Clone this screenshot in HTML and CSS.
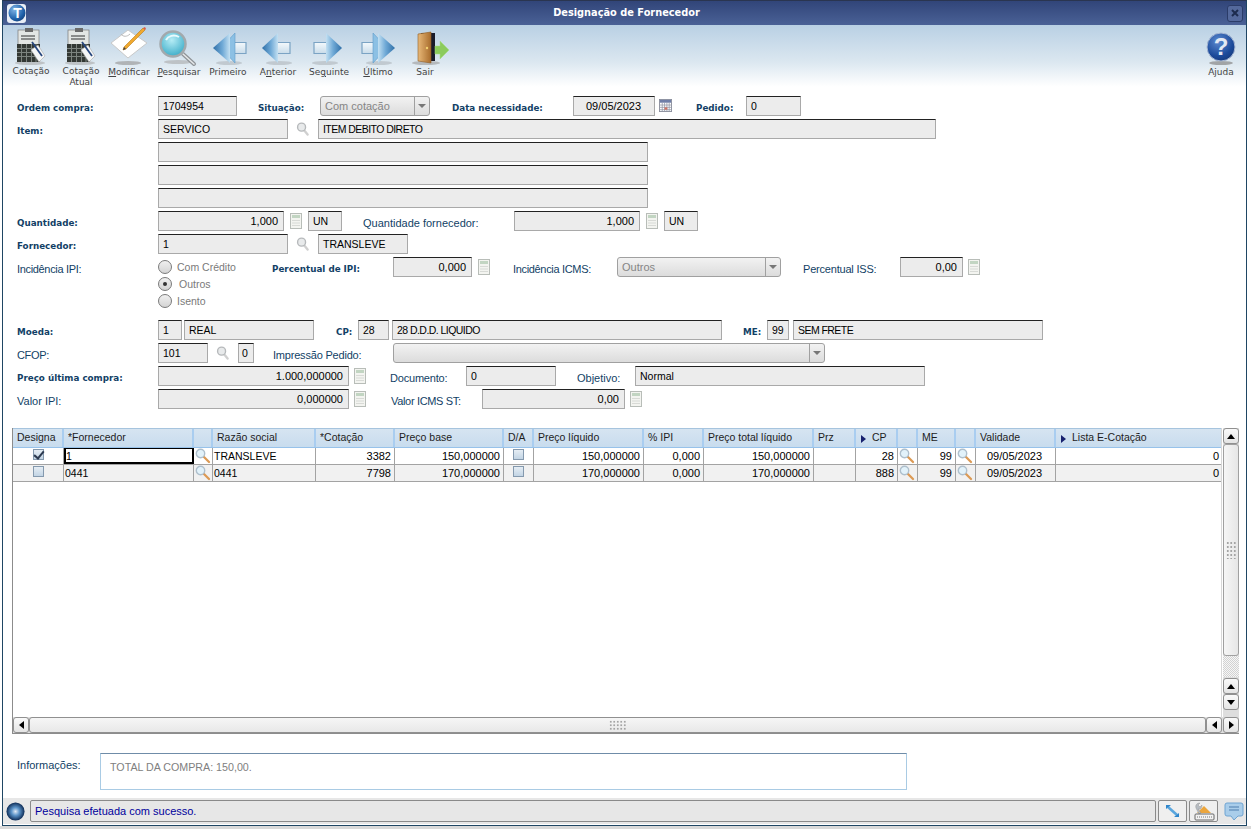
FILE: index.html
```html
<!DOCTYPE html>
<html lang="pt-BR">
<head>
<meta charset="utf-8">
<title>Designação de Fornecedor</title>
<link rel="stylesheet" href="styles.css">
</head>
<body>
<svg class="sprite" aria-hidden="true">
  <defs>
    <linearGradient id="gHead" x1="0" x2="1" y1="0" y2="0"><stop offset="0" stop-color="#2f6fa8"/><stop offset=".55" stop-color="#6fa9d6"/><stop offset="1" stop-color="#c3e0f2"/></linearGradient>
    <linearGradient id="gStem" x1="0" x2="0" y1="0" y2="1"><stop offset="0" stop-color="#f4f9fc"/><stop offset="1" stop-color="#c9dcea"/></linearGradient>
    <linearGradient id="gDoor" x1="0" x2="1" y1="0" y2="0"><stop offset="0" stop-color="#e8b878"/><stop offset="1" stop-color="#a86c2c"/></linearGradient>
    <radialGradient id="gLens" cx=".45" cy=".35" r=".7"><stop offset="0" stop-color="#b5ecf5"/><stop offset="1" stop-color="#35a9c6"/></radialGradient>
    <radialGradient id="gBall" cx=".4" cy=".3" r=".75"><stop offset="0" stop-color="#5c8ad0"/><stop offset=".7" stop-color="#1c4a9a"/><stop offset="1" stop-color="#163a7c"/></radialGradient>
    <radialGradient id="gLogo" cx=".35" cy=".3" r=".8"><stop offset="0" stop-color="#7fb4e6"/><stop offset=".7" stop-color="#1d5fa8"/><stop offset="1" stop-color="#123c74"/></radialGradient>
    <radialGradient id="gStatus" cx=".5" cy=".5" r=".5"><stop offset="0" stop-color="#dfeaf6"/><stop offset=".45" stop-color="#5b93c8"/><stop offset="1" stop-color="#0e2c56"/></radialGradient>
    <symbol id="i-cot" viewBox="0 0 40 42">
      <ellipse cx="19" cy="36" rx="15" ry="2" fill="#a9a9a9" opacity=".6"/>
      <rect x="7" y="3" width="21" height="16" fill="#e3e6e4" stroke="#777" stroke-width=".7"/>
      <rect x="14" y="1" width="8" height="4" fill="#6a6a6a"/>
      <path d="M10 9h14M10 12h14" stroke="#333" stroke-width="1.2"/>
      <rect x="6" y="17" width="23" height="18" fill="#333834"/>
      <path d="M6 21.500h23M6 25.500h23M6 29.500h23M10.500 17v18M15.500 17v18M20.500 17v18M25 17v18" stroke="#7d847f" stroke-width="1"/>
      <path d="M20 23l7-5 7 11-6 6z" fill="#f5f6f6" stroke="#aaa" stroke-width=".6"/>
      <path d="M21 15l10 14" stroke="#27477e" stroke-width="1.800"/>
    </symbol>
    <symbol id="i-mod" viewBox="0 0 40 42">
      <ellipse cx="19" cy="36" rx="13" ry="2" fill="#9d9d9d" opacity=".7"/>
      <path d="M2 16L19 3l19 13-19 15z" fill="#fff" stroke="#c9c9c9"/>
      <path d="M12 7c2 3 6 3 9 0" fill="none" stroke="#bbb"/>
      <path d="M14 23l3-1L36 3l-2-2L15 20z" fill="#f0a92e" stroke="#b9791a" stroke-width=".6"/>
      <path d="M34 1l2-1 1 2-1 1z" fill="#d85a4a"/>
      <path d="M14 23l1-3 2 2z" fill="#444"/>
    </symbol>
    <symbol id="i-pes" viewBox="0 0 40 42">
      <ellipse cx="19" cy="35" rx="14" ry="2" fill="#aaa" opacity=".6"/>
      <path d="M24 27l11 10" stroke="#8f9498" stroke-width="4" stroke-linecap="round"/>
      <path d="M24 27l11 10" stroke="#e5e8ea" stroke-width="1.500" stroke-linecap="round"/>
      <circle cx="14" cy="17" r="12.500" fill="url(#gLens)" stroke="#a2a9ad" stroke-width="2.500"/>
      <path d="M7 13c2-4 8-6 13-3" fill="none" stroke="#e8fafd" stroke-width="2"/>
    </symbol>
    <g id="i-ant-shape">
      <ellipse cx="21" cy="36" rx="13" ry="2" fill="#b5bcc2" opacity=".7"/>
      <path d="M19 15.500h13v11H19z" fill="url(#gStem)" stroke="#7ba3c4" stroke-width="1.200"/>
      <path d="M4 21L20 6v30z" fill="url(#gHead)"/>
    </g>
    <g id="i-pri-shape">
      <ellipse cx="21" cy="36" rx="13" ry="2" fill="#b5bcc2" opacity=".7"/>
      <path d="M26 15.500h12v11H26z" fill="url(#gStem)" stroke="#7ba3c4" stroke-width="1.200"/>
      <path d="M13 21L27 6v30z" fill="#8cc0e4" stroke="#5e9ccb" stroke-width=".6"/>
      <path d="M5 21L22 6v30z" fill="url(#gHead)"/>
    </g>
    <symbol id="i-ant" viewBox="0 0 40 42"><use href="#i-ant-shape"/></symbol>
    <symbol id="i-pri" viewBox="0 0 40 42"><use href="#i-pri-shape"/></symbol>
    <symbol id="i-seg" viewBox="0 0 40 42"><use href="#i-ant-shape" transform="translate(37) scale(-1 1)"/></symbol>
    <symbol id="i-ult" viewBox="0 0 40 42"><use href="#i-pri-shape" transform="translate(42) scale(-1 1)"/></symbol>
    <symbol id="i-sair" viewBox="0 0 46 42">
      <ellipse cx="21" cy="36" rx="14" ry="2" fill="#999" opacity=".6"/>
      <path d="M16 6h14v28H16z" fill="#191b2a"/>
      <path d="M13 7l13-2v31l-13-2z" fill="url(#gDoor)" stroke="#8d5a22" stroke-width=".6"/>
      <circle cx="22" cy="21" r="1.200" fill="#f2d070"/>
      <path d="M30 19h5v-5l9 9-9 9v-5h-5z" fill="#8ccb5c" stroke="#a9dc80" stroke-width=".5"/>
    </symbol>
    <symbol id="i-aj" viewBox="0 0 40 42">
      <ellipse cx="20" cy="36" rx="12" ry="2" fill="#888" opacity=".7"/>
      <circle cx="20" cy="20" r="14" fill="url(#gBall)" stroke="#a8b8d4"/>
    </symbol>
    <symbol id="i-lupa" viewBox="0 0 14 16">
      <path d="M8.500 9l4 5" stroke="#d0d0d0" stroke-width="2.500" stroke-linecap="round"/>
      <circle cx="6" cy="6" r="4.300" fill="#e8eaeb" stroke="#b6b9bb" stroke-width="1.500"/>
    </symbol>
    <symbol id="i-lupac" viewBox="0 0 18 16">
      <path d="M9.500 8.500l5.500 5.500" stroke="#dc9a55" stroke-width="2.300" stroke-linecap="round"/>
      <circle cx="6.500" cy="5.500" r="4.200" fill="#e2f2fa" stroke="#aebfcc" stroke-width="1.400"/>
    </symbol>
    <symbol id="i-calc" viewBox="0 0 12 16">
      <rect x=".5" y=".5" width="11" height="15" fill="#f3f4f0" stroke="#b8bdb8"/>
      <rect x="2" y="2" width="8" height="3" fill="#c2d5c2"/>
      <path d="M2 7.500h8M2 10h8M2 12.500h8" stroke="#d8dad6" stroke-width="1.200"/>
    </symbol>
    <symbol id="i-cal" viewBox="0 0 14 14">
      <rect x=".5" y=".5" width="13" height="13" fill="#fff" stroke="#8a8f9c"/>
      <rect x="1" y="1" width="12" height="3" fill="#6f7ea8"/>
      <path d="M1 6.500h12M1 9h12M1 11.500h12M3.500 4v9M6 4v9M8.500 4v9M11 4v9" stroke="#8f94a4" stroke-width=".8"/>
      <rect x="6" y="9" width="3" height="2.500" fill="#d07060"/>
    </symbol>
    <symbol id="i-resize" viewBox="0 0 13 12">
      <path d="M2 2l9 8" stroke="#5aa6de" stroke-width="2.600"/>
      <path d="M0 0h5L0 4zM13 12H8l5-4z" fill="#2e86cc"/>
    </symbol>
    <symbol id="i-tool" viewBox="0 0 22 20">
      <path d="M4 12L11 5l7 7z" fill="#eba53c"/>
      <path d="M3 7c-1-3 1-5 4-5l-2 2 2 2 2-2c0 3-2 5-4 4l3 4-2 1z" fill="#b6bcc2" stroke="#888" stroke-width=".4"/>
      <rect x="2" y="13" width="19" height="6" rx="1" fill="#f2f2f2" stroke="#666"/>
      <path d="M4 16h15" stroke="#777" stroke-dasharray="1 1"/>
    </symbol>
    <symbol id="i-chat" viewBox="0 0 20 20">
      <path d="M3 2h14a2 2 0 0 1 2 2v9a2 2 0 0 1-2 2h-3l-4 4-3-4H3a2 2 0 0 1-2-2V4a2 2 0 0 1 2-2z" fill="#a9cdea" stroke="#6ea4d2"/>
      <path d="M5 6h10M5 9h10" stroke="#4f7fae" stroke-width="1.200"/>
    </symbol>
  </defs>
</svg>

<div class="window">
  <header class="titlebar">
    <div class="logo">
      <svg class="logo-svg" viewBox="0 0 18 18"><circle cx="9" cy="9" r="8.500" fill="url(#gLogo)"/><text x="9.500" y="14" class="logo-t">T</text></svg>
    </div>
    <h1 class="title">Designação de Fornecedor</h1>
    <button class="close" type="button" aria-label="Fechar">
      <svg class="close-svg" viewBox="0 0 8 8"><path d="M1 1l6 6M7 1L1 7" stroke="#1c2b4e" stroke-width="2"/></svg>
    </button>
  </header>

  <nav class="toolbar">
    <div class="tool w50"><svg class="ti"><use href="#i-cot"/></svg><span class="tl tl-up">Cotação</span></div>
    <div class="tool w50"><svg class="ti"><use href="#i-cot"/></svg><span class="tl tl-up">Cotação<br>Atual</span></div>
    <div class="tool w46"><svg class="ti"><use href="#i-mod"/></svg><span class="tl"><u>M</u>odificar</span></div>
    <div class="tool w54"><svg class="ti"><use href="#i-pes"/></svg><span class="tl"><u>P</u>esquisar</span></div>
    <div class="tool w44"><svg class="ti"><use href="#i-pri"/></svg><span class="tl">Primeiro</span></div>
    <div class="tool w56"><svg class="ti"><use href="#i-ant"/></svg><span class="tl">A<u>n</u>terior</span></div>
    <div class="tool w46"><svg class="ti"><use href="#i-seg"/></svg><span class="tl">Se<u>g</u>uinte</span></div>
    <div class="tool w52"><svg class="ti"><use href="#i-ult"/></svg><span class="tl"><u>Ú</u>ltimo</span></div>
    <div class="tool w42"><svg class="ti ti-sair"><use href="#i-sair"/></svg><span class="tl">Sair</span></div>
    <div class="tool tool-help w50">
      <span class="help-wrap"><svg class="ti"><use href="#i-aj"/></svg><span class="help-q">?</span></span>
      <span class="tl">Ajuda</span>
    </div>
  </nav>

  <main class="form">
    <div class="row">
      <label class="lb w141">Ordem compra:</label>
      <div class="f w79">1704954</div>
      <label class="lb ml21 w62">Situação:</label>
      <div class="sel w110"><span class="sel-t">Com cotação</span><span class="sel-a"></span></div>
      <label class="lb ml22 w121">Data necessidade:</label>
      <div class="f w82 ctr">09/05/2023</div>
      <svg class="ico-cal ml4"><use href="#i-cal"/></svg>
      <label class="lb ml24 w50">Pedido:</label>
      <div class="f w55">0</div>
    </div>
    <div class="row">
      <label class="lb w141">Item:</label>
      <div class="f w130">SERVICO</div>
      <svg class="ico-lupa ml8"><use href="#i-lupa"/></svg>
      <div class="f w618 ml9 tight">ITEM DEBITO DIRETO</div>
    </div>
    <div class="row"><div class="f w490 ml141"></div></div>
    <div class="row"><div class="f w490 ml141"></div></div>
    <div class="row"><div class="f w490 ml141"></div></div>
    <div class="row">
      <label class="lb w141">Quantidade:</label>
      <div class="f w126 num">1,000</div>
      <svg class="ico-calc ml6"><use href="#i-calc"/></svg>
      <div class="f w34 ml6">UN</div>
      <label class="ln ml21 w151">Quantidade fornecedor:</label>
      <div class="f w126 num">1,000</div>
      <svg class="ico-calc ml6"><use href="#i-calc"/></svg>
      <div class="f w34 ml6">UN</div>
    </div>
    <div class="row">
      <label class="lb w141">Fornecedor:</label>
      <div class="f w130">1</div>
      <svg class="ico-lupa ml8"><use href="#i-lupa"/></svg>
      <div class="f w90 ml9">TRANSLEVE</div>
    </div>
    <div class="row row-radio">
      <label class="ln w141 ltight">Incidência IPI:</label>
      <div class="radios">
        <div class="ropt"><span class="radio"></span><span class="rtxt">Com Crédito</span></div>
        <div class="ropt"><span class="radio on"></span><span class="rtxt rtxt-on">Outros</span></div>
        <div class="ropt"><span class="radio"></span><span class="rtxt">Isento</span></div>
      </div>
      <label class="lb w121">Percentual de IPI:</label>
      <div class="f w79 num">0,000</div>
      <svg class="ico-calc ml6"><use href="#i-calc"/></svg>
      <label class="ln ml23 w104 ltight">Incidência ICMS:</label>
      <div class="sel w164"><span class="sel-t">Outros</span><span class="sel-a"></span></div>
      <label class="ln ml22 w97 ltight2">Percentual ISS:</label>
      <div class="f w63 num">0,00</div>
      <svg class="ico-calc ml5"><use href="#i-calc"/></svg>
    </div>
    <div class="row">
      <label class="lb w141">Moeda:</label>
      <div class="f w24">1</div>
      <div class="f w130 ml2">REAL</div>
      <label class="lb ml22 w22">CP:</label>
      <div class="f w31">28</div>
      <div class="f w330 ml3 tight">28 D.D.D. LIQUIDO</div>
      <label class="lb ml21 w24">ME:</label>
      <div class="f w22">99</div>
      <div class="f w250 ml4 tight">SEM FRETE</div>
    </div>
    <div class="row">
      <label class="ln w141 ltight">CFOP:</label>
      <div class="f w50">101</div>
      <svg class="ico-lupa ml8"><use href="#i-lupa"/></svg>
      <div class="f w16 ml9 f-tiny">0</div>
      <label class="ln ml19 w120 ltight2">Impressão Pedido:</label>
      <div class="sel w432"><span class="sel-t"></span><span class="sel-a"></span></div>
    </div>
    <div class="row">
      <label class="lb w141">Preço última compra:</label>
      <div class="f w191 num">1.000,000000</div>
      <svg class="ico-calc ml5"><use href="#i-calc"/></svg>
      <label class="ln ml24 w76 ltight2">Documento:</label>
      <div class="f w90">0</div>
      <label class="ln ml21 w58">Objetivo:</label>
      <div class="f w290">Normal</div>
    </div>
    <div class="row">
      <label class="ln w141">Valor IPI:</label>
      <div class="f w191 num">0,000000</div>
      <svg class="ico-calc ml5"><use href="#i-calc"/></svg>
      <label class="ln ml25 w91 ltight">Valor ICMS ST:</label>
      <div class="f w143 num">0,00</div>
      <svg class="ico-calc ml5"><use href="#i-calc"/></svg>
    </div>
  </main>

  <section class="grid">
    <div class="grid-body">
      <div class="table">
        <div class="tr th">
          <div class="c">Designa</div>
          <div class="c">*Fornecedor</div>
          <div class="c"></div>
          <div class="c">Razão social</div>
          <div class="c">*Cotação</div>
          <div class="c">Preço base</div>
          <div class="c">D/A</div>
          <div class="c">Preço líquido</div>
          <div class="c">% IPI</div>
          <div class="c">Preço total líquido</div>
          <div class="c">Prz</div>
          <div class="c"><span class="tri"></span>CP</div>
          <div class="c"></div>
          <div class="c">ME</div>
          <div class="c"></div>
          <div class="c">Validade</div>
          <div class="c"><span class="tri"></span>Lista E-Cotação</div>
        </div>
        <div class="tr td">
          <div class="c cc"><span class="chk on"></span></div>
          <div class="c c-edit">1</div>
          <div class="c ci"><svg class="ico-lupac"><use href="#i-lupac"/></svg></div>
          <div class="c">TRANSLEVE</div>
          <div class="c r">3382</div>
          <div class="c r">150,000000</div>
          <div class="c cc"><span class="chk"></span></div>
          <div class="c r">150,000000</div>
          <div class="c r">0,000</div>
          <div class="c r">150,000000</div>
          <div class="c"></div>
          <div class="c r">28</div>
          <div class="c ci"><svg class="ico-lupac"><use href="#i-lupac"/></svg></div>
          <div class="c r">99</div>
          <div class="c ci"><svg class="ico-lupac"><use href="#i-lupac"/></svg></div>
          <div class="c ctr">09/05/2023</div>
          <div class="c r">0</div>
        </div>
        <div class="tr td alt">
          <div class="c cc"><span class="chk"></span></div>
          <div class="c">0441</div>
          <div class="c ci"><svg class="ico-lupac"><use href="#i-lupac"/></svg></div>
          <div class="c">0441</div>
          <div class="c r">7798</div>
          <div class="c r">170,000000</div>
          <div class="c cc"><span class="chk"></span></div>
          <div class="c r">170,000000</div>
          <div class="c r">0,000</div>
          <div class="c r">170,000000</div>
          <div class="c"></div>
          <div class="c r">888</div>
          <div class="c ci"><svg class="ico-lupac"><use href="#i-lupac"/></svg></div>
          <div class="c r">99</div>
          <div class="c ci"><svg class="ico-lupac"><use href="#i-lupac"/></svg></div>
          <div class="c ctr">09/05/2023</div>
          <div class="c r">0</div>
        </div>
      </div>
      <div class="vscroll">
        <div class="sb sb-v"><span class="a-up"></span></div>
        <div class="thumb-v"><span class="grip"></span></div>
        <div class="dotted"></div>
        <div class="sb sb-v"><span class="a-up"></span></div>
        <div class="sb sb-v"><span class="a-down"></span></div>
      </div>
    </div>
    <div class="hscroll">
      <div class="sb sb-h"><span class="a-left"></span></div>
      <div class="thumb-h"><span class="grip grip-h"></span></div>
      <div class="sb sb-h"><span class="a-left"></span></div>
      <div class="sb sb-h sb-last"><span class="a-right"></span></div>
    </div>
  </section>

  <section class="info">
    <label class="ln w83 info-l">Informações:</label>
    <div class="info-box">TOTAL DA COMPRA: 150,00.</div>
  </section>

  <footer class="status">
    <svg class="status-logo" viewBox="0 0 20 20"><circle cx="10" cy="10" r="9.500" fill="url(#gStatus)"/></svg>
    <div class="status-msg">Pesquisa efetuada com sucesso.</div>
    <button class="sbtn sbtn-a" type="button" aria-label="Redimensionar"><svg class="sicon"><use href="#i-resize"/></svg></button>
    <button class="sbtn sbtn-b" type="button" aria-label="Configurar"><svg class="sicon2"><use href="#i-tool"/></svg></button>
    <svg class="chat"><use href="#i-chat"/></svg>
  </footer>
</div>
</body>
</html>
```
FILE: styles.css
```css
* { box-sizing: border-box; }
html, body { margin: 0; padding: 0; }
body {
  width: 1251px;
  height: 829px;
  overflow: hidden;
  background: linear-gradient(#fff 826px, #d9d9d9 826px);
  font-family: "Liberation Sans", Arial, sans-serif;
  font-size: 10.5px;
  color: #000;
}
.sprite { position: absolute; width: 0; height: 0; }

.window {
  margin-left: 2px;
  width: 1245px;
  height: 826px;
  background: #fff;
  border: 1px solid #1f4664;
  border-top-color: #2a3550;
  display: flex;
  flex-direction: column;
}

/* title */
.titlebar {
  height: 24px;
  flex: none;
  background: linear-gradient(#314579, #4a6196);
  display: flex;
  align-items: center;
  padding: 0 3px 0 4px;
}
.logo { width: 19px; height: 19px; background: #e9eef6; border-radius: 3px; display: flex; align-items: center; justify-content: center; }
.logo-svg { width: 18px; height: 18px; }
.logo-t { font: bold 14px "Liberation Sans", sans-serif; fill: #fff; text-anchor: middle; }
.title {
  flex: 1;
  margin: 0 0 2px;
  text-align: center;
  font: bold 9.8px "DejaVu Sans", Verdana, sans-serif;
  color: #fff;
}
.close {
  width: 16px; height: 17px; padding: 0;
  background: #54699c;
  border: 1px solid #2b3c68;
  border-radius: 3px;
  display: flex; align-items: center; justify-content: center;
}
.close-svg { width: 8px; height: 8px; }

/* toolbar */
.toolbar {
  height: 67px;
  flex: none;
  display: flex;
  padding: 2px 3px 0 3px;
  background: linear-gradient(#b9d0e4, #dbe7f0 55%, #fff 92%);
}
.tool { display: flex; flex-direction: column; align-items: center; flex: none; }
.tool-help { margin-left: auto; margin-right: -3px; }
.ti { width: 40px; height: 42px; flex: none; overflow: visible; }
.ti-sair { width: 46px; margin-right: -6px; margin-left: 0; }
.tl {
  font: 9px/11px "DejaVu Sans", Verdana, sans-serif;
  color: #444;
  text-align: center;
  white-space: nowrap;
  margin-top: -2px;
}
.tl-up { margin-top: -3px; line-height: 10.5px; }
.help-wrap { position: relative; display: block; height: 42px; width: 40px; }
.help-q {
  position: absolute; left: 0; right: 0; top: 5px;
  text-align: center;
  font: bold 24px/30px "Liberation Sans", sans-serif;
  color: #e3e9f3;
}

/* form */
.form { padding: 4px 0 0 14px; flex: none; }
.row { display: flex; align-items: flex-start; height: 20px; margin-bottom: 3px; }
.row-radio { height: 60px; }
.lb, .ln { display: block; flex: none; color: #123f66; white-space: nowrap; }
.lb { font: bold 8.75px/24px "DejaVu Sans", Verdana, sans-serif; }
.ln { font-size: 11px; line-height: 24px; }
.ltight { letter-spacing: -.33px; }
.ltight2 { letter-spacing: -.2px; }
.tight { letter-spacing: -.55px; }
.f {
  flex: none;
  height: 20px;
  padding: 0 5px 0 4px;
  line-height: 18px;
  background: #ececec;
  border: 1px solid #a9a9a9;
  border-top-color: #222;
  white-space: nowrap;
  overflow: hidden;
}
.f-tiny { padding: 0 0 0 3px; }
.num { text-align: right; font-size: 11px; }
.ctr { text-align: center; font-size: 11px; }

.sel {
  flex: none;
  height: 20px;
  display: flex;
  border: 1px solid #a0a0a0;
  border-radius: 3px;
  background: linear-gradient(#f2f2f2, #dcdcdc);
  color: #858585;
  font-size: 11px;
  line-height: 18px;
}
.sel-t { flex: 1; padding-left: 4px; }
.sel-a {
  width: 15px;
  border-left: 1px solid #a0a0a0;
  position: relative;
}
.sel-a::after {
  content: "";
  position: absolute; left: 3px; top: 7px;
  border: 4px solid transparent;
  border-top: 4px solid #777;
  border-bottom: 0;
}

.ico-lupa { width: 13px; height: 16px; flex: none; margin-top: 2px; }
.ico-calc { width: 12px; height: 16px; flex: none; margin-top: 2px; }
.ico-cal { width: 13px; height: 13px; flex: none; margin-top: 3px; }

.radios { width: 114px; flex: none; display: flex; flex-direction: column; margin-top: 1px; }
.ropt { height: 17px; display: flex; align-items: center; color: #7a7a7a; font-size: 10.5px; }
.radio {
  width: 14px; height: 14px; flex: none;
  border: 1px solid #7a7a7a;
  border-radius: 50%;
  background: linear-gradient(#f0f0f0, #d4d4d4);
  position: relative;
}
.radio.on::after {
  content: ""; position: absolute; left: 4px; top: 4px;
  width: 4px; height: 4px; border-radius: 50%; background: #333;
}
.rtxt { margin-left: 5px; }
.rtxt-on { margin-left: 7px; }

/* width and margin helpers */
.w16 { width: 16px; } .w22 { width: 22px; } .w24 { width: 24px; } .w31 { width: 31px; }
.w34 { width: 34px; } .w42 { width: 42px; } .w44 { width: 44px; } .w46 { width: 46px; }
.w50 { width: 50px; } .w52 { width: 52px; } .w54 { width: 54px; } .w55 { width: 55px; }
.w56 { width: 56px; } .w58 { width: 58px; } .w62 { width: 62px; } .w63 { width: 63px; }
.w76 { width: 76px; } .w79 { width: 79px; } .w82 { width: 82px; } .w83 { width: 83px; }
.w90 { width: 90px; } .w91 { width: 91px; } .w97 { width: 97px; } .w104 { width: 104px; }
.w110 { width: 110px; } .w120 { width: 120px; } .w121 { width: 121px; } .w126 { width: 126px; }
.w130 { width: 130px; } .w141 { width: 141px; } .w143 { width: 143px; } .w151 { width: 151px; }
.w164 { width: 164px; } .w191 { width: 191px; } .w250 { width: 250px; } .w290 { width: 290px; }
.w330 { width: 330px; } .w432 { width: 432px; } .w490 { width: 490px; } .w618 { width: 618px; }
.ml2 { margin-left: 2px; } .ml3 { margin-left: 3px; } .ml4 { margin-left: 4px; } .ml5 { margin-left: 5px; }
.ml6 { margin-left: 6px; } .ml8 { margin-left: 8px; } .ml9 { margin-left: 9px; } .ml19 { margin-left: 19px; }
.ml21 { margin-left: 21px; } .ml22 { margin-left: 22px; } .ml23 { margin-left: 23px; } .ml24 { margin-left: 24px; }
.ml25 { margin-left: 25px; } .ml141 { margin-left: 141px; }

/* grid */
.grid {
  flex: none;
  margin: 16px 0 0 9px;
  width: 1227px;
  height: 306px;
  display: flex;
  flex-direction: column;
  border-left: 1px solid #8c8c8c;
  border-bottom: 1px solid #8c8c8c;
  background: #fff;
}
.grid-body { flex: 1; display: flex; min-height: 0; }
.table { width: 1209px; flex: none; border-right: 1px solid #d8d8d8; }
.tr {
  display: grid;
  grid-template-columns: 51px 130px 19px 103px 79px 109px 30px 110px 60px 110px 42px 42px 20px 38px 20px 80px 166px;
}
.th {
  height: 20px;
  background: linear-gradient(#d6e4f1, #c8dcee);
  border-top: 1px solid #a6c4de;
  border-bottom: 1px solid #97c2ea;
  line-height: 16px;
}
.th .c { padding-left: 4px; border-right: 2px solid #a9cdf0; font-size: 10.5px; white-space: nowrap; color: #1d1d1d; overflow: hidden; }
.th .c:last-child { border-right: 0; }
.tri {
  display: inline-block;
  border-left: 5px solid #16206e;
  border-top: 4px solid transparent;
  border-bottom: 4px solid transparent;
  margin: 0 6px 0 1px;
  vertical-align: -2px;
}
.td { height: 17px; line-height: 17px; border-bottom: 1px solid #a3a3a3; }
.td .c { border-right: 1px solid #a3a3a3; padding: 0 3px 0 1px; white-space: nowrap; overflow: hidden; font-size: 10.5px; }
.td .c:last-child { border-right: 0; }
.td .r { text-align: right; font-size: 11px; }
.td .ctr { font-size: 11px; text-align: center; }
.alt { background: #f1f1f1; }
.td .cc { display: flex; justify-content: center; padding: 1px 0 0; }
.td .ci { padding: 0; }
.td .c-edit { background: #fff; border: 1px solid #000; border-bottom-width: 2px; border-right-width: 2px; border-left-width: 2px; padding-left: 0; line-height: 15px; }
.chk {
  width: 11px; height: 11px;
  border: 1px solid #8499ae;
  background: linear-gradient(#e5edf4, #c2d4e4);
  position: relative;
  display: block;
}
.chk.on::after {
  content: "";
  position: absolute; left: 2px; top: -1px;
  width: 4px; height: 8px;
  border: solid #2c3a50;
  border-width: 0 2px 2px 0;
  transform: rotate(40deg);
}
.ico-lupac { width: 18px; height: 16px; display: block; }

.vscroll { width: 16px; flex: none; margin-left: 1px; display: flex; flex-direction: column; background: #dedede; }
.sb {
  flex: none;
  background: linear-gradient(#fafafa, #e4e4e4);
  border: 1px solid #909090;
  border-radius: 3px;
  display: flex; align-items: center; justify-content: center;
}
.sb-v { height: 16px; }
.sb-h { width: 16px; height: 100%; }
.sb-last { margin-left: 1px; }
.thumb-v {
  height: 212px; flex: none;
  background: linear-gradient(90deg, #f6f6f6, #e6e6e6);
  border: 1px solid #a0a0a0;
  border-radius: 3px;
  display: flex; align-items: center; justify-content: center;
}
.dotted {
  height: 21px; flex: none; margin-bottom: 1px;
  background: repeating-conic-gradient(#d2d2d2 0 25%, #f6f6f6 0 50%) 0 0 / 2px 2px;
}
.grip {
  width: 10px; height: 18px;
  background: radial-gradient(circle, #a4a4a4 0 .8px, transparent 1px) 0 0 / 3.5px 4px;
}
.grip-h { width: 18px; height: 10px; background-size: 3.5px 3.5px; }
.a-up { border: 4px solid transparent; border-bottom: 5px solid #000; border-top: 0; }
.a-down { border: 4px solid transparent; border-top: 5px solid #000; border-bottom: 0; }
.a-left { border: 4px solid transparent; border-right: 5px solid #000; border-left: 0; }
.a-right { border: 4px solid transparent; border-left: 5px solid #000; border-right: 0; }

.hscroll { height: 16px; flex: none; display: flex; background: #dedede; }
.thumb-h {
  width: 1177px; flex: none;
  background: linear-gradient(#f6f6f6, #e8e8e8);
  border: 1px solid #909090;
  border-radius: 3px;
  display: flex; align-items: center; justify-content: center;
}

/* info */
.info { flex: none; display: flex; margin: 19px 0 0 14px; height: 37px; }
.info-l { margin-top: 0; line-height: 24px; }
.info-box {
  width: 807px; height: 37px;
  border: 1px solid #a9cbe4;
  border-top-color: #6f8ca8;
  padding: 5px 9px;
  line-height: 16px;
  font-size: 10.7px;
  color: #808080;
  background: #fff;
}

/* status */
.status {
  flex: none;
  margin-top: 8px;
  height: 26px;
  display: flex;
  align-items: center;
  padding: 0 2px 0 3px;
  background: #e7e7e7;
}
.status-logo { width: 19px; height: 19px; flex: none; }
.status-msg {
  width: 1126px; height: 22px; margin-left: 5px;
  flex: none;
  border: 1px solid #8a8a8a;
  border-radius: 2px;
  padding-left: 4px;
  line-height: 21px;
  font-size: 11px;
  color: #00009c;
}
.sbtn {
  flex: none; height: 22px; padding: 0;
  background: #efefef;
  border: 1px solid #8a8a8a;
  border-radius: 2px;
  display: flex; align-items: center; justify-content: center;
}
.sbtn-a { width: 29px; margin-left: 2px; }
.sbtn-b { width: 29px; margin-left: 2px; }
.sicon { width: 13px; height: 12px; }
.sicon2 { width: 22px; height: 20px; }
.chat { width: 20px; height: 20px; flex: none; margin-left: 6px; }
```
